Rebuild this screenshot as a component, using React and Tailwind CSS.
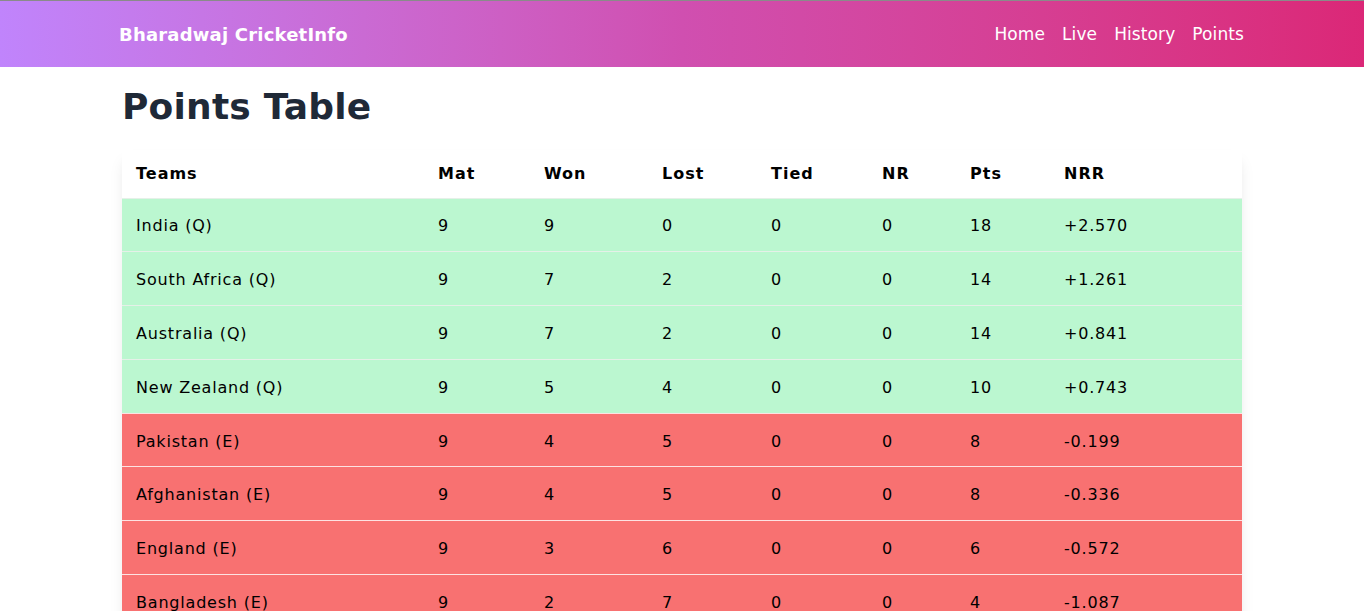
import React from "react";

const teams = [
  { name: "India (Q)", mat: 9, won: 9, lost: 0, tied: 0, nr: 0, pts: 18, nrr: "+2.570", q: true },
  { name: "South Africa (Q)", mat: 9, won: 7, lost: 2, tied: 0, nr: 0, pts: 14, nrr: "+1.261", q: true },
  { name: "Australia (Q)", mat: 9, won: 7, lost: 2, tied: 0, nr: 0, pts: 14, nrr: "+0.841", q: true },
  { name: "New Zealand (Q)", mat: 9, won: 5, lost: 4, tied: 0, nr: 0, pts: 10, nrr: "+0.743", q: true },
  { name: "Pakistan (E)", mat: 9, won: 4, lost: 5, tied: 0, nr: 0, pts: 8, nrr: "-0.199", q: false },
  { name: "Afghanistan (E)", mat: 9, won: 4, lost: 5, tied: 0, nr: 0, pts: 8, nrr: "-0.336", q: false },
  { name: "England (E)", mat: 9, won: 3, lost: 6, tied: 0, nr: 0, pts: 6, nrr: "-0.572", q: false },
  { name: "Bangladesh (E)", mat: 9, won: 2, lost: 7, tied: 0, nr: 0, pts: 4, nrr: "-1.087", q: false },
  { name: "Sri Lanka (E)", mat: 9, won: 2, lost: 7, tied: 0, nr: 0, pts: 4, nrr: "-1.419", q: false },
  { name: "Netherlands (E)", mat: 9, won: 2, lost: 7, tied: 0, nr: 0, pts: 4, nrr: "-1.825", q: false },
];

const App = () => {
  return (
    <div className="min-h-screen bg-white border-t border-[#8a8a8a] font-['DejaVu_Sans',sans-serif]">
      {/* Navbar */}
      <nav className="h-[66px] bg-linear-to-r from-[#c084fc] via-[#d04fb0] to-[#db2777]">
        <div className="max-w-[1126px] mx-auto h-full flex items-center justify-between">
          <a href="#" className="text-white text-[18px] font-bold tracking-[0.2px] pt-[1px]">
            Bharadwaj CricketInfo
          </a>
          <ul className="flex items-center gap-[17px] text-white text-[17px] tracking-[0.1px] pt-[2px] pr-[1px]">
            <li>Home</li>
            <li>Live</li>
            <li>History</li>
            <li>Points</li>
          </ul>
        </div>
      </nav>

      <div className="max-w-[1120px] mx-auto">
        {/* Heading */}
        <h1 className="text-[36px] font-bold text-[#1f2937] pt-[18px] pb-[21px] leading-[44px] tracking-[0.2px]">
          Points Table
        </h1>

        {/* Table */}
        <div className="shadow-lg">
          <table className="w-full text-left text-black text-[16px] tracking-[0.8px]">
            <thead>
              <tr className="h-[48px] tracking-[1px]">
                <th className="w-[316px] pl-[14px] font-bold">Teams</th>
                <th className="w-[106px] font-bold">Mat</th>
                <th className="w-[118px] font-bold">Won</th>
                <th className="w-[109px] font-bold">Lost</th>
                <th className="w-[111px] font-bold">Tied</th>
                <th className="w-[88px] font-bold">NR</th>
                <th className="w-[94px] font-bold">Pts</th>
                <th className="font-bold">NRR</th>
              </tr>
            </thead>
            <tbody>
              {teams.map((t) => (
                <tr
                  key={t.name}
                  className={`h-[53.8px] border-t ${
                    t.q ? "bg-[#bbf7d0] border-[#e5f0e8]" : "bg-[#f87171] border-[#fde2e2]"
                  }`}
                >
                  <td className="pl-[14px] pt-[3px]">{t.name}</td>
                  <td className="pt-[3px]">{t.mat}</td>
                  <td className="pt-[3px]">{t.won}</td>
                  <td className="pt-[3px]">{t.lost}</td>
                  <td className="pt-[3px]">{t.tied}</td>
                  <td className="pt-[3px]">{t.nr}</td>
                  <td className="pt-[3px]">{t.pts}</td>
                  <td className="pt-[3px]">{t.nrr}</td>
                </tr>
              ))}
            </tbody>
          </table>
        </div>
      </div>
    </div>
  );
};

export default App;
